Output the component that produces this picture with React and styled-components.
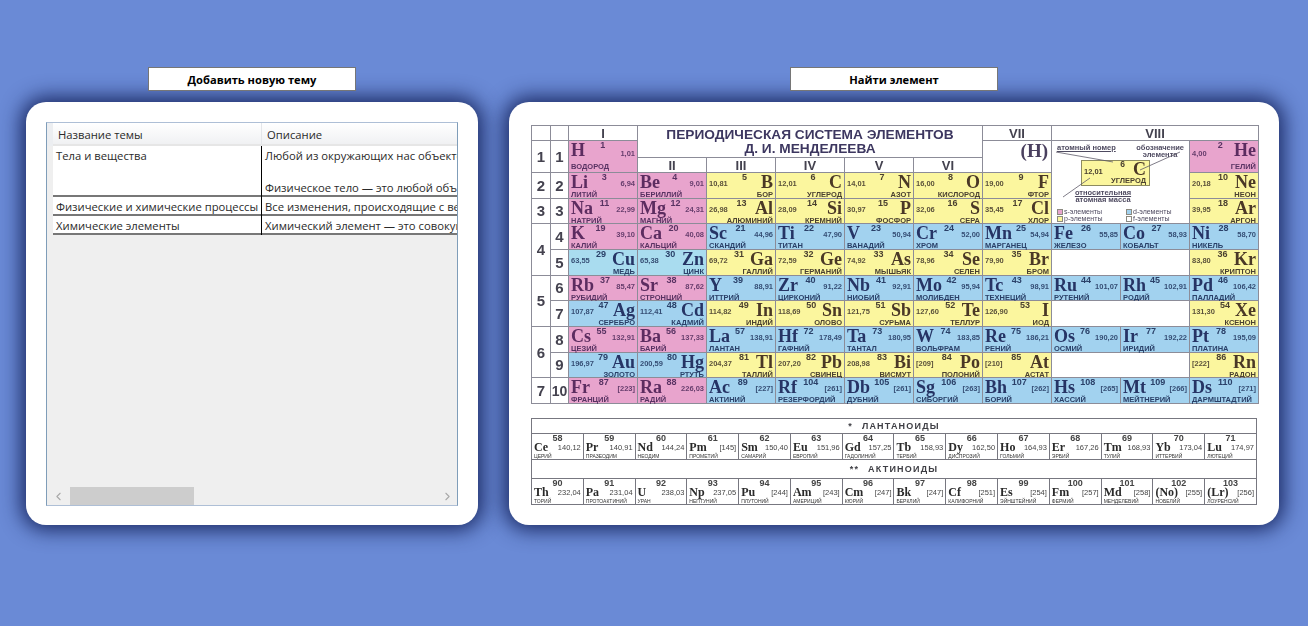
import React from 'react';
import styled, { createGlobalStyle } from 'styled-components';
import { ChevronLeft, ChevronRight } from 'lucide-react';

const GlobalStyle = createGlobalStyle`
  html, body {
    margin: 0;
    padding: 0;
    height: 100%;
    background-color: #6a8ad6;
  }
`;

const SANS = '"Liberation Sans", Arial, sans-serif';
const SERIF = '"Liberation Serif", "Times New Roman", serif';
const UI = '"Open Sans", "Noto Sans", sans-serif';

const COLORS = {
  pink: { bg: '#e8a4cd', ink: '#5c2c60', small: '#583262' },
  blue: { bg: '#a2d2ef', ink: '#263465', small: '#2a4068' },
  cyan: { bg: '#a9dcef', ink: '#263465', small: '#2a4068' },
  yellow: { bg: '#fbf69e', ink: '#4a3826', small: '#4a4030' },
};

const Page = styled.div`
  display: flex;
  gap: 31px;
  padding: 67px 0 0 26px;
  height: 626px;
  box-sizing: border-box;
  overflow: hidden;
`;

const Column = styled.div`
  display: flex;
  flex-direction: column;
  align-items: center;
  gap: 11px;
  width: ${(p) => p.$width}px;
`;

const ActionButton = styled.button`
  position: relative;
  z-index: 1;
  width: 208px;
  height: 24px;
  padding: 0;
  background: #fff;
  border: 1px solid #767676;
  border-radius: 0;
  color: #000;
  font-family: ${UI};
  font-size: 11.15px;
  font-weight: 700;
`;

const Card = styled.div`
  width: 100%;
  height: 423px;
  box-sizing: border-box;
  background: #fff;
  border-radius: 20px;
  box-shadow: 0 0 20px 5px rgba(16, 28, 84, 0.88);
`;

const TableCard = styled(Card)`
  padding: 20px 20px 19px;
`;

const GridBox = styled.div`
  display: flex;
  flex-direction: column;
  height: 100%;
  box-sizing: border-box;
  border: 1px solid #7f9db9;
  border-top-color: #aebfd6;
  border-bottom-color: #aebfd6;
  background: #efefef;
  overflow: hidden;
  font-family: ${UI};
  font-size: 11.25px;
  color: #2a2a2a;
`;

const Row = styled.div`
  display: grid;
  grid-template-columns: 6px 208px 1px 1fr;
  height: ${(p) => p.$height}px;
  flex: none;
`;

const HeadStub = styled.div`
  background: #eceef1;
`;

const HeadCell = styled.div`
  display: flex;
  align-items: center;
  padding: 2px 0 0 5px;
  white-space: nowrap;
  background: linear-gradient(#ffffff, #f0f1f3);
  border-bottom: 2px solid #e6e6e6;
  box-sizing: border-box;
`;

const HeadGap = styled.div`
  background: #e4e6ea;
`;

const RowStub = styled.div`
  background: #efefef;
`;

const BodyCell = styled.div`
  padding: 2px 0 0 3px;
  background: #fff;
  border-bottom: 2px solid #777;
  box-sizing: border-box;
  white-space: nowrap;
  overflow: hidden;
  line-height: 16px;
`;

const RowLine = styled.div`
  background: #000;
`;

const Blank = styled.div`
  height: 16px;
`;

const GridFill = styled.div`
  flex: 1;
`;

const ScrollBar = styled.div`
  display: flex;
  align-items: center;
  height: 18px;
  flex: none;
  color: #a8a8a8;
`;

const ScrollEnd = styled.div`
  display: flex;
  justify-content: center;
  width: ${(p) => p.$width}px;
  flex: none;
`;

const ScrollThumb = styled.div`
  width: 124px;
  height: 100%;
  background: #cdcdcd;
  flex: none;
`;

const ScrollTrack = styled.div`
  flex: 1;
`;

const ChartCard = styled(Card)`
  display: flex;
  flex-direction: column;
  gap: 14px;
  padding: 23px 21px 0 22px;
`;

const Chart = styled.div`
  display: grid;
  grid-template-columns: 18px 17px repeat(10, 68px);
  grid-template-rows: 14px 16px 14px repeat(9, 1fr);
  gap: 1px;
  padding: 1px;
  width: 728px;
  height: 279px;
  flex: none;
  box-sizing: border-box;
  background: #8c8c98;
  filter: blur(0.45px);
`;

const Plain = styled.div`
  grid-column: ${(p) => p.$col};
  grid-row: ${(p) => p.$row};
  background: #fff;
  display: flex;
  align-items: center;
  justify-content: center;
  font-family: ${SANS};
  font-weight: 700;
  color: #44424f;
  font-size: ${(p) => p.$size || 12}px;
  min-width: 0;
  min-height: 0;
`;

const Title = styled(Plain)`
  flex-direction: column;
  font-size: 13.7px;
  line-height: 14px;
  color: #3d3760;
  box-sizing: border-box;
`;

const HydrogenMark = styled(Plain)`
  align-items: flex-start;
  justify-content: flex-end;
  padding: 0 3px;
  font-family: ${SERIF};
  font-size: 19px;
  line-height: 20px;
  color: #4a405f;
`;

const Legend = styled.div`
  grid-column: 10 / 12;
  grid-row: 2 / 6;
  position: relative;
  background: #fff;
  font-family: ${SANS};
  font-size: 7.5px;
  font-weight: 700;
  color: #4e4a60;
  display: flex;
  flex-direction: column;
  padding: 3px 5px 0;
  box-sizing: border-box;
  line-height: 7px;
`;

const LegendTop = styled.div`
  display: flex;
  justify-content: space-between;
`;

const LegendNote = styled.span`
  text-align: center;
  text-decoration: ${(p) => (p.$under ? 'underline' : 'none')};
`;

const SampleCard = styled.div`
  display: grid;
  grid-template-columns: 1fr auto;
  grid-template-rows: 15px 9px;
  width: 69px;
  height: 26px;
  margin: 2px 0 0 24px;
  padding: 0 3px 0 2px;
  box-sizing: border-box;
  background: #fbf69e;
  border: 1px solid #8c8a60;
  color: #4a4030;
`;

const SampleLeft = styled.div`
  display: flex;
  flex-direction: column;
  font-size: 7.5px;
  line-height: 7px;
`;

const SampleNumber = styled.span`
  align-self: flex-end;
  padding-right: 8px;
  font-size: 8.5px;
`;

const SampleSymbol = styled.div`
  font-family: ${SERIF};
  font-size: 18px;
  line-height: 17px;
  color: #4a3826;
`;

const SampleName = styled.div`
  grid-column: 1 / 3;
  text-align: right;
  line-height: 9px;
`;

const LegendCaption = styled.div`
  margin: 3px 0 0 16px;
  font-size: 7.5px;
  text-align: center;
  width: 60px;
`;

const KeyGrid = styled.div`
  display: grid;
  grid-template-columns: 69px 1fr;
  margin-top: 5px;
  font-weight: 400;
`;

const KeyItem = styled.div`
  display: flex;
  align-items: center;
  gap: 1px;
  font-size: 7px;
`;

const KeySwatch = styled.span`
  width: 6px;
  height: 6px;
  flex: none;
  box-sizing: border-box;
  background: ${(p) => p.$color};
  border: 1px solid #8c8a80;
`;

const LegendLines = styled.svg`
  position: absolute;
  left: 0;
  top: 0;
  pointer-events: none;
`;

const Cell = styled.div`
  grid-column: ${(p) => p.$col};
  grid-row: ${(p) => p.$row};
  display: grid;
  grid-template-columns: auto 1fr auto;
  grid-template-rows: 1fr 8px;
  padding: 1px 2px 1px 2px;
  box-sizing: border-box;
  background: ${(p) => COLORS[p.$tone].bg};
  min-width: 0;
  min-height: 0;
`;

const Symbol = styled.div`
  font-family: ${SERIF};
  font-weight: 700;
  font-size: 18px;
  line-height: 17px;
  color: ${(p) => COLORS[p.$tone].ink};
`;

const Number = styled.div`
  justify-self: center;
  margin-top: -1px;
  font-family: ${SANS};
  font-size: 9px;
  font-weight: 700;
  line-height: 9px;
  color: ${(p) => COLORS[p.$tone].small};
`;

const Mass = styled.div`
  align-self: center;
  margin-top: 2px;
  font-family: ${SANS};
  font-size: 7.5px;
  font-weight: 700;
  color: ${(p) => COLORS[p.$tone].small};
  opacity: 0.9;
`;

const Name = styled.div`
  grid-column: 1 / 4;
  justify-self: ${(p) => (p.$side === 'L' ? 'start' : 'end')};
  font-family: ${SANS};
  font-size: 7.5px;
  font-weight: 700;
  line-height: 8px;
  white-space: nowrap;
  color: ${(p) => COLORS[p.$tone].small};
`;

const Lower = styled.div`
  display: grid;
  grid-template-columns: repeat(14, 1fr);
  grid-template-rows: 14px 25px 18px 25px;
  gap: 1px;
  padding: 1px;
  width: 726px;
  box-sizing: border-box;
  background: #777780;
  filter: blur(0.4px);
`;

const LowerHead = styled.div`
  grid-column: 1 / -1;
  display: flex;
  align-items: center;
  justify-content: center;
  gap: 9px;
  background: #fff;
  font-family: ${SANS};
  font-size: 9px;
  font-weight: 700;
  letter-spacing: 1.2px;
  color: #3e3e44;
`;

const LowerCell = styled.div`
  display: grid;
  grid-template-columns: auto 1fr;
  grid-template-rows: 8px 11px 6px;
  padding: 0 2px;
  box-sizing: border-box;
  background: #fff;
  min-width: 0;
  color: #333;
`;

const LowerNumber = styled.div`
  grid-column: 1 / 3;
  justify-self: center;
  font-family: ${SANS};
  font-size: 9px;
  font-weight: 700;
  line-height: 8px;
  color: #444;
`;

const LowerSymbol = styled.div`
  font-family: ${SERIF};
  font-size: 12px;
  font-weight: 700;
  line-height: 11px;
  color: #2a2a2a;
`;

const LowerMass = styled.div`
  justify-self: end;
  align-self: center;
  font-family: ${SANS};
  font-size: 7.5px;
  color: #444;
`;

const LowerName = styled.div`
  grid-column: 1 / 3;
  font-family: ${SANS};
  font-size: 5px;
  line-height: 6px;
  white-space: nowrap;
  color: #333;
`;

// [символ, номер, масса, название, цвет, сторона, колонка]
const MAIN = [
  ['4', [['Li', 3, '6,94', 'ЛИТИЙ', 'pink', 'L', 3], ['Be', 4, '9,01', 'БЕРИЛЛИЙ', 'pink', 'L', 4], ['B', 5, '10,81', 'БОР', 'yellow', 'R', 5], ['C', 6, '12,01', 'УГЛЕРОД', 'yellow', 'R', 6], ['N', 7, '14,01', 'АЗОТ', 'yellow', 'R', 7], ['O', 8, '16,00', 'КИСЛОРОД', 'yellow', 'R', 8], ['F', 9, '19,00', 'ФТОР', 'yellow', 'R', 9], ['Ne', 10, '20,18', 'НЕОН', 'yellow', 'R', 12]]],
  ['5', [['Na', 11, '22,99', 'НАТРИЙ', 'pink', 'L', 3], ['Mg', 12, '24,31', 'МАГНИЙ', 'pink', 'L', 4], ['Al', 13, '26,98', 'АЛЮМИНИЙ', 'yellow', 'R', 5], ['Si', 14, '28,09', 'КРЕМНИЙ', 'yellow', 'R', 6], ['P', 15, '30,97', 'ФОСФОР', 'yellow', 'R', 7], ['S', 16, '32,06', 'СЕРА', 'yellow', 'R', 8], ['Cl', 17, '35,45', 'ХЛОР', 'yellow', 'R', 9], ['Ar', 18, '39,95', 'АРГОН', 'yellow', 'R', 12]]],
  ['6', [['K', 19, '39,10', 'КАЛИЙ', 'pink', 'L', 3], ['Ca', 20, '40,08', 'КАЛЬЦИЙ', 'pink', 'L', 4], ['Sc', 21, '44,96', 'СКАНДИЙ', 'blue', 'L', 5], ['Ti', 22, '47,90', 'ТИТАН', 'blue', 'L', 6], ['V', 23, '50,94', 'ВАНАДИЙ', 'blue', 'L', 7], ['Cr', 24, '52,00', 'ХРОМ', 'blue', 'L', 8], ['Mn', 25, '54,94', 'МАРГАНЕЦ', 'blue', 'L', 9], ['Fe', 26, '55,85', 'ЖЕЛЕЗО', 'blue', 'L', 10], ['Co', 27, '58,93', 'КОБАЛЬТ', 'blue', 'L', 11], ['Ni', 28, '58,70', 'НИКЕЛЬ', 'blue', 'L', 12]]],
  ['7', [['Cu', 29, '63,55', 'МЕДЬ', 'cyan', 'R', 3], ['Zn', 30, '65,38', 'ЦИНК', 'cyan', 'R', 4], ['Ga', 31, '69,72', 'ГАЛЛИЙ', 'yellow', 'R', 5], ['Ge', 32, '72,59', 'ГЕРМАНИЙ', 'yellow', 'R', 6], ['As', 33, '74,92', 'МЫШЬЯК', 'yellow', 'R', 7], ['Se', 34, '78,96', 'СЕЛЕН', 'yellow', 'R', 8], ['Br', 35, '79,90', 'БРОМ', 'yellow', 'R', 9], ['Kr', 36, '83,80', 'КРИПТОН', 'yellow', 'R', 12]]],
  ['8', [['Rb', 37, '85,47', 'РУБИДИЙ', 'pink', 'L', 3], ['Sr', 38, '87,62', 'СТРОНЦИЙ', 'pink', 'L', 4], ['Y', 39, '88,91', 'ИТТРИЙ', 'blue', 'L', 5], ['Zr', 40, '91,22', 'ЦИРКОНИЙ', 'blue', 'L', 6], ['Nb', 41, '92,91', 'НИОБИЙ', 'blue', 'L', 7], ['Mo', 42, '95,94', 'МОЛИБДЕН', 'blue', 'L', 8], ['Tc', 43, '98,91', 'ТЕХНЕЦИЙ', 'blue', 'L', 9], ['Ru', 44, '101,07', 'РУТЕНИЙ', 'blue', 'L', 10], ['Rh', 45, '102,91', 'РОДИЙ', 'blue', 'L', 11], ['Pd', 46, '106,42', 'ПАЛЛАДИЙ', 'blue', 'L', 12]]],
  ['9', [['Ag', 47, '107,87', 'СЕРЕБРО', 'blue', 'R', 3], ['Cd', 48, '112,41', 'КАДМИЙ', 'blue', 'R', 4], ['In', 49, '114,82', 'ИНДИЙ', 'yellow', 'R', 5], ['Sn', 50, '118,69', 'ОЛОВО', 'yellow', 'R', 6], ['Sb', 51, '121,75', 'СУРЬМА', 'yellow', 'R', 7], ['Te', 52, '127,60', 'ТЕЛЛУР', 'yellow', 'R', 8], ['I', 53, '126,90', 'ИОД', 'yellow', 'R', 9], ['Xe', 54, '131,30', 'КСЕНОН', 'yellow', 'R', 12]]],
  ['10', [['Cs', 55, '132,91', 'ЦЕЗИЙ', 'pink', 'L', 3], ['Ba', 56, '137,33', 'БАРИЙ', 'pink', 'L', 4], ['La', 57, '138,91', 'ЛАНТАН', 'blue', 'L', 5], ['Hf', 72, '178,49', 'ГАФНИЙ', 'blue', 'L', 6], ['Ta', 73, '180,95', 'ТАНТАЛ', 'blue', 'L', 7], ['W', 74, '183,85', 'ВОЛЬФРАМ', 'blue', 'L', 8], ['Re', 75, '186,21', 'РЕНИЙ', 'blue', 'L', 9], ['Os', 76, '190,20', 'ОСМИЙ', 'blue', 'L', 10], ['Ir', 77, '192,22', 'ИРИДИЙ', 'blue', 'L', 11], ['Pt', 78, '195,09', 'ПЛАТИНА', 'blue', 'L', 12]]],
  ['11', [['Au', 79, '196,97', 'ЗОЛОТО', 'blue', 'R', 3], ['Hg', 80, '200,59', 'РТУТЬ', 'blue', 'R', 4], ['Tl', 81, '204,37', 'ТАЛЛИЙ', 'yellow', 'R', 5], ['Pb', 82, '207,20', 'СВИНЕЦ', 'yellow', 'R', 6], ['Bi', 83, '208,98', 'ВИСМУТ', 'yellow', 'R', 7], ['Po', 84, '[209]', 'ПОЛОНИЙ', 'yellow', 'R', 8], ['At', 85, '[210]', 'АСТАТ', 'yellow', 'R', 9], ['Rn', 86, '[222]', 'РАДОН', 'yellow', 'R', 12]]],
  ['12', [['Fr', 87, '[223]', 'ФРАНЦИЙ', 'pink', 'L', 3], ['Ra', 88, '226,03', 'РАДИЙ', 'pink', 'L', 4], ['Ac', 89, '[227]', 'АКТИНИЙ', 'blue', 'L', 5], ['Rf', 104, '[261]', 'РЕЗЕРФОРДИЙ', 'blue', 'L', 6], ['Db', 105, '[261]', 'ДУБНИЙ', 'blue', 'L', 7], ['Sg', 106, '[263]', 'СИБОРГИЙ', 'blue', 'L', 8], ['Bh', 107, '[262]', 'БОРИЙ', 'blue', 'L', 9], ['Hs', 108, '[265]', 'ХАССИЙ', 'blue', 'L', 10], ['Mt', 109, '[266]', 'МЕЙТНЕРИЙ', 'blue', 'L', 11], ['Ds', 110, '[271]', 'ДАРМШТАДТИЙ', 'blue', 'L', 12]]],
];

const PERIODS = [
  ['1', '2 / 4'], ['2', '4'], ['3', '5'], ['4', '6 / 8'], ['5', '8 / 10'], ['6', '10 / 12'], ['7', '12'],
];
const RANKS = [['1', '2 / 4'], ['2', '4'], ['3', '5'], ['4', '6'], ['5', '7'], ['6', '8'], ['7', '9'], ['8', '10'], ['9', '11'], ['10', '12']];
const EMPTY_ROWS = ['7', '9', '11'];

const LANTHANIDES = [
  ['Ce', 58, '140,12', 'ЦЕРИЙ'], ['Pr', 59, '140,91', 'ПРАЗЕОДИМ'], ['Nd', 60, '144,24', 'НЕОДИМ'], ['Pm', 61, '[145]', 'ПРОМЕТИЙ'],
  ['Sm', 62, '150,40', 'САМАРИЙ'], ['Eu', 63, '151,96', 'ЕВРОПИЙ'], ['Gd', 64, '157,25', 'ГАДОЛИНИЙ'], ['Tb', 65, '158,93', 'ТЕРБИЙ'],
  ['Dy', 66, '162,50', 'ДИСПРОЗИЙ'], ['Ho', 67, '164,93', 'ГОЛЬМИЙ'], ['Er', 68, '167,26', 'ЭРБИЙ'], ['Tm', 69, '168,93', 'ТУЛИЙ'],
  ['Yb', 70, '173,04', 'ИТТЕРБИЙ'], ['Lu', 71, '174,97', 'ЛЮТЕЦИЙ'],
];
const ACTINIDES = [
  ['Th', 90, '232,04', 'ТОРИЙ'], ['Pa', 91, '231,04', 'ПРОТОАКТИНИЙ'], ['U', 92, '238,03', 'УРАН'], ['Np', 93, '237,05', 'НЕПТУНИЙ'],
  ['Pu', 94, '[244]', 'ПЛУТОНИЙ'], ['Am', 95, '[243]', 'АМЕРИЦИЙ'], ['Cm', 96, '[247]', 'КЮРИЙ'], ['Bk', 97, '[247]', 'БЕРКЛИЙ'],
  ['Cf', 98, '[251]', 'КАЛИФОРНИЙ'], ['Es', 99, '[254]', 'ЭЙНШТЕЙНИЙ'], ['Fm', 100, '[257]', 'ФЕРМИЙ'], ['Md', 101, '[258]', 'МЕНДЕЛЕВИЙ'],
  ['(No)', 102, '[255]', 'НОБЕЛИЙ'], ['(Lr)', 103, '[256]', 'ЛОУРЕНСИЙ'],
];

function Element({ sym, num, mass, name, tone, side, col, row }) {
  return (
    <Cell $col={col} $row={row} $tone={tone}>
      {side === 'L' ? (
        <>
          <Symbol $tone={tone}>{sym}</Symbol>
          <Number $tone={tone}>{num}</Number>
          <Mass $tone={tone}>{mass}</Mass>
        </>
      ) : (
        <>
          <Mass $tone={tone}>{mass}</Mass>
          <Number $tone={tone}>{num}</Number>
          <Symbol $tone={tone}>{sym}</Symbol>
        </>
      )}
      <Name $side={side} $tone={tone}>{name}</Name>
    </Cell>
  );
}

function LegendBox() {
  return (
    <Legend>
      <LegendTop>
        <LegendNote $under>атомный номер</LegendNote>
        <LegendNote>обозначение<br />элемента</LegendNote>
      </LegendTop>
      <SampleCard>
        <SampleLeft>
          <SampleNumber>6</SampleNumber>
          <span>12,01</span>
        </SampleLeft>
        <SampleSymbol>C</SampleSymbol>
        <SampleName>УГЛЕРОД</SampleName>
      </SampleCard>
      <LegendCaption>
        <LegendNote $under>относительная</LegendNote><br />атомная масса
      </LegendCaption>
      <KeyGrid>
        <KeyItem><KeySwatch $color="#e8a4cd" />s-элементы</KeyItem>
        <KeyItem><KeySwatch $color="#a2d2ef" />d-элементы</KeyItem>
        <KeyItem><KeySwatch $color="#fbf69e" />p-элементы</KeyItem>
        <KeyItem><KeySwatch $color="#fff" />f-элементы</KeyItem>
      </KeyGrid>
      <LegendLines width="137" height="84" viewBox="0 0 137 84">
        <path d="M4 11 L61 21 M128 11 L88 29 M11 56 L38 37" stroke="#5e5a6a" strokeWidth="0.8" fill="none" />
      </LegendLines>
    </Legend>
  );
}

function RareRow({ items }) {
  return items.map(([sym, num, mass, name]) => (
    <LowerCell key={sym}>
      <LowerNumber>{num}</LowerNumber>
      <LowerSymbol>{sym}</LowerSymbol>
      <LowerMass>{mass}</LowerMass>
      <LowerName>{name}</LowerName>
    </LowerCell>
  ));
}

function ThemeTable() {
  return (
    <GridBox>
      <Row $height={23}>
        <HeadStub />
        <HeadCell>Название темы</HeadCell>
        <HeadGap />
        <HeadCell>Описание</HeadCell>
      </Row>
      <Row $height={51}>
        <RowStub />
        <BodyCell>Тела и вещества</BodyCell>
        <RowLine />
        <BodyCell>
          Любой из окружающих нас объектов называют телом.
          <Blank />
          Физическое тело — это любой объект окружающего мира.
        </BodyCell>
      </Row>
      <Row $height={19}>
        <RowStub />
        <BodyCell>Физические и химические процессы</BodyCell>
        <RowLine />
        <BodyCell>Все изменения, происходящие с веществами, называют процессами.</BodyCell>
      </Row>
      <Row $height={19}>
        <RowStub />
        <BodyCell>Химические элементы</BodyCell>
        <RowLine />
        <BodyCell>Химический элемент — это совокупность атомов одного вида.</BodyCell>
      </Row>
      <GridFill />
      <ScrollBar>
        <ScrollEnd $width={23}><ChevronLeft size={13} /></ScrollEnd>
        <ScrollThumb />
        <ScrollTrack />
        <ScrollEnd $width={20}><ChevronRight size={13} /></ScrollEnd>
      </ScrollBar>
    </GridBox>
  );
}

function PeriodicTable() {
  return (
    <ChartCard>
      <Chart>
        <Plain $col="1" $row="1" />
        <Plain $col="2" $row="1" />
        <Plain $col="3" $row="1" $size={13}>I</Plain>
        <Title $col="4 / 9" $row="1 / 3">
          <span>ПЕРИОДИЧЕСКАЯ СИСТЕМА ЭЛЕМЕНТОВ</span>
          <span>Д. И. МЕНДЕЛЕЕВА</span>
        </Title>
        <Plain $col="9" $row="1" $size={13}>VII</Plain>
        <Plain $col="10 / 13" $row="1" $size={13}>VIII</Plain>
        {['II', 'III', 'IV', 'V', 'VI'].map((g, i) => (
          <Plain key={g} $col={`${i + 4}`} $row="3" $size={13}>{g}</Plain>
        ))}
        <HydrogenMark $col="9" $row="2 / 4">(H)</HydrogenMark>
        <LegendBox />
        {PERIODS.map(([label, row]) => (
          <Plain key={label} $col="1" $row={row} $size={15}>{label}</Plain>
        ))}
        {RANKS.map(([label, row]) => (
          <Plain key={label} $col="2" $row={row} $size={label === '10' ? 14 : 15}>{label}</Plain>
        ))}
        <Element sym="H" num={1} mass="1,01" name="ВОДОРОД" tone="pink" side="L" col="3" row="2 / 4" />
        <Element sym="He" num={2} mass="4,00" name="ГЕЛИЙ" tone="pink" side="R" col="12" row="2 / 4" />
        {MAIN.map(([row, cells]) =>
          cells.map(([sym, num, mass, name, tone, side, col]) => (
            <Element key={sym} sym={sym} num={num} mass={mass} name={name} tone={tone} side={side} col={`${col}`} row={row} />
          ))
        )}
        {EMPTY_ROWS.map((row) => (
          <Plain key={row} $col="10 / 12" $row={row} />
        ))}
      </Chart>
      <Lower>
        <LowerHead><span>*</span><span>ЛАНТАНОИДЫ</span></LowerHead>
        <RareRow items={LANTHANIDES} />
        <LowerHead><span>**</span><span>АКТИНОИДЫ</span></LowerHead>
        <RareRow items={ACTINIDES} />
      </Lower>
    </ChartCard>
  );
}

export default function App() {
  return (
    <>
      <GlobalStyle />
      <Page>
        <Column $width={452}>
          <ActionButton>Добавить новую тему</ActionButton>
          <TableCard>
            <ThemeTable />
          </TableCard>
        </Column>
        <Column $width={770}>
          <ActionButton>Найти элемент</ActionButton>
          <PeriodicTable />
        </Column>
      </Page>
    </>
  );
}
